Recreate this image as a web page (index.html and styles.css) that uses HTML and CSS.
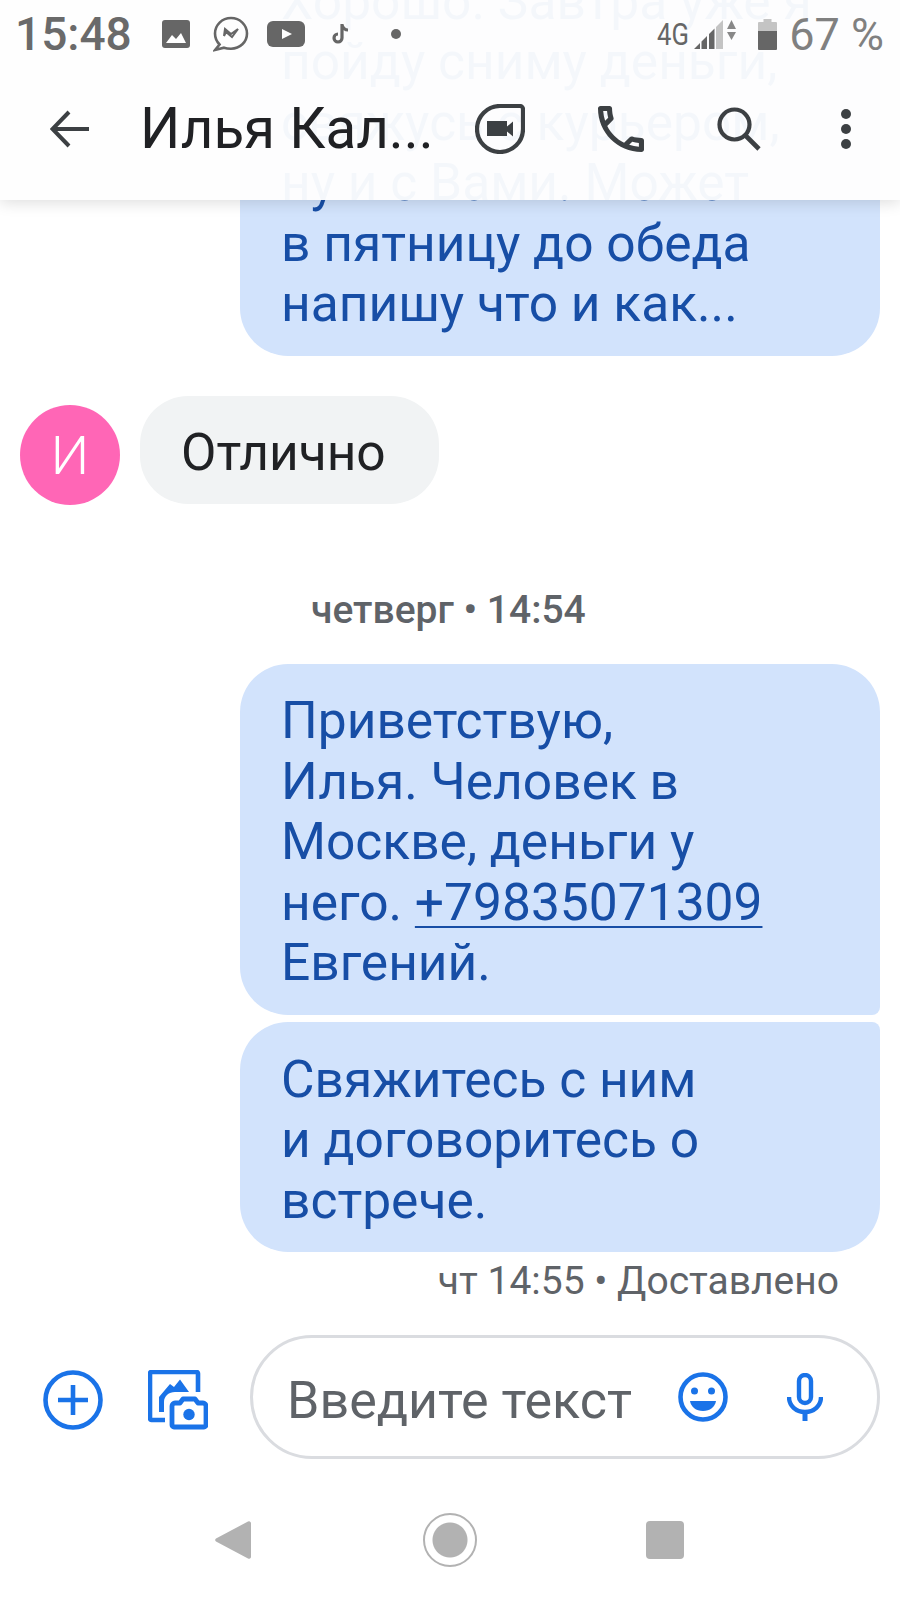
FILE: index.html
```html
<!DOCTYPE html>
<html lang="ru">

<head>
    <meta charset="UTF-8">
    <meta name="viewport" content="width=device-width, initial-scale=1.0">
    <title>Илья Калинин</title>
    <link rel="stylesheet" href="styles.css">
</head>

<body>
    <div class="screen">
        <header class="top">
            <div class="status">
                <span class="clock">15:48</span>
                <div class="notify">
                    <svg class="ic-photo" viewBox="0 0 28 28"><path d="M3 0h22a3 3 0 0 1 3 3v22a3 3 0 0 1-3 3H3a3 3 0 0 1-3-3V3a3 3 0 0 1 3-3z" fill="#666"/><path d="M4 23l6-8 4 4 5-6 5 10z" fill="#fff"/></svg>
                    <svg class="ic-messenger" viewBox="0 0 36 36"><path d="M18 2C9 2 2 9 2 17.500c0 4.500 2 8.300 4.500 11L2 34l9-2.300c2 .7 4 1 7 1 9 0 16-6.700 16-15.200S27 2 18 2z" fill="none" stroke="#666" stroke-width="2.600"/><path d="M11 20l1-7 6 5 7-5-6 8-6-5z" fill="none" stroke="#666" stroke-width="2"/></svg>
                    <svg class="ic-youtube" viewBox="0 0 38 26"><rect width="38" height="26" rx="6" fill="#666"/><path d="M15 8l10 5-10 5z" fill="#fff"/></svg>
                    <svg class="ic-tiktok" viewBox="0 0 20 22"><path d="M11 1v14a4 4 0 1 1-4-4M11 2c1 3 3 5 6 5" fill="none" stroke="#666" stroke-width="3.200"/></svg>
                    <span class="dot"></span>
                </div>
                <div class="system">
                    <span class="net">4G</span>
                    <svg class="ic-signal" viewBox="0 0 42 30"><path d="M0 30l6-6v6zM7.500 30v-7.500l5.500-5.500v13zM15 30V15l5.500-5.500V30z" fill="#666"/><path d="M22 30V8l7-7v29z" fill="#c4c4c4"/><path d="M37.500 1l4.500 9h-9zM33 13h9l-4.500 8z" fill="#888"/></svg>
                    <svg class="ic-battery" viewBox="0 0 19 31"><path d="M5.500 0h8v3h4.500a1 1 0 0 1 1 1v8H0V4a1 1 0 0 1 1-1h4.500z" fill="#c4c4c4"/><path d="M0 12h19v18a1 1 0 0 1-1 1H1a1 1 0 0 1-1-1z" fill="#666"/></svg>
                    <span class="percent">67 %</span>
                </div>
            </div>
            <div class="toolbar">
                <svg class="ic-back" viewBox="0 0 40 40"><path d="M39 20H3M19 3L2.500 20 19 37" fill="none" stroke="#3c4043" stroke-width="4"/></svg>
                <h1 class="name">Илья Кал...</h1>
                <svg class="ic-duo" viewBox="0 0 50 50"><path d="M25 2h20a3 3 0 0 1 3 3v20a23 23 0 1 1-23-23z" fill="none" stroke="#3c4043" stroke-width="4.200"/><path d="M12 17h20v5.500l6-5v15l-6-5V32H12z" fill="#3c4043"/></svg>
                <svg class="ic-phone" viewBox="3 3 18 18"><path d="M6.540 5c.06.89.21 1.760.45 2.590l-1.200 1.200c-.41-1.200-.67-2.470-.76-3.790h1.510m9.860 12.020c.85.24 1.720.39 2.600.45v1.490c-1.320-.09-2.590-.35-3.800-.75l1.200-1.190M7.500 3H4c-.55 0-1 .45-1 1 0 9.390 7.610 17 17 17 .55 0 1-.45 1-1v-3.490c0-.55-.45-1-1-1-1.240 0-2.450-.2-3.570-.57-.1-.04-.21-.05-.31-.05-.26 0-.51.1-.71.29l-2.200 2.200c-2.830-1.450-5.150-3.760-6.590-6.590l2.200-2.200c.28-.28.36-.67.25-1.020C8.700 6.450 8.500 5.250 8.500 4c0-.55-.45-1-1-1z" fill="#3c4043"/></svg>
                <svg class="ic-search" viewBox="0 0 44 44"><circle cx="17.500" cy="17.500" r="15" fill="none" stroke="#3c4043" stroke-width="4.200"/><path d="M28.500 28.500L42 42" stroke="#3c4043" stroke-width="4.600"/></svg>
                <svg class="ic-more" viewBox="0 0 10 40"><circle cx="5" cy="5" r="5" fill="#3c4043"/><circle cx="5" cy="20" r="5" fill="#3c4043"/><circle cx="5" cy="35" r="5" fill="#3c4043"/></svg>
            </div>
        </header>

        <main class="messages">
            <div class="bubble sent single">Хорошо. Завтра уже я<br>пойду сниму деньги,<br>свяжусь с курьером,<br>ну и с Вами. Может<br>в пятницу до обеда<br>напишу что и как...</div>

            <div class="incoming">
                <div class="avatar">И</div>
                <div class="bubble received">Отлично</div>
            </div>

            <div class="stamp">четверг • 14:54</div>

            <div class="bubble sent first">Приветствую,<br>Илья. Человек в<br>Москве, деньги у<br>него. <a href="#">+79835071309</a><br>Евгений.</div>
            <div class="bubble sent last">Свяжитесь с ним<br>и договоритесь о<br>встрече.</div>
            <div class="delivered">чт 14:55 • Доставлено</div>
        </main>

        <div class="composer">
            <svg class="ic-add" viewBox="0 0 60 60"><circle cx="30" cy="30" r="27.500" fill="none" stroke="#1a73e8" stroke-width="4.600"/><path d="M30 15v30M15 30h30" stroke="#1a73e8" stroke-width="4.600"/></svg>
            <svg class="ic-gallery" viewBox="0 0 60 60"><path d="M17 50H3.500a1.500 1.500 0 0 1-1.500-1.500v-45A1.500 1.500 0 0 1 3.500 2h45A1.500 1.500 0 0 1 50 3.500V22" fill="none" stroke="#1a73e8" stroke-width="4.600"/><path d="M11 42V27l11-13 4 3 6-7.500 9 12.500H27c-6 0-11 4-11 10v10z" fill="#1a73e8"/><path d="M24 36a3 3 0 0 1 3-3h5l3-4h12l3 4h5a3 3 0 0 1 3 3v19a2 2 0 0 1-2 2H26a2 2 0 0 1-2-2z" fill="none" stroke="#1a73e8" stroke-width="4.800" stroke-linejoin="round"/><circle cx="41" cy="44.500" r="5.700" fill="#1a73e8"/></svg>
            <div class="field">
                <span class="placeholder">Введите текст</span>
                <svg class="ic-emoji" viewBox="0 0 50 50"><circle cx="25" cy="25" r="22.500" fill="none" stroke="#1a73e8" stroke-width="4.600"/><circle cx="16.500" cy="19" r="3.500" fill="#1a73e8"/><circle cx="33.500" cy="19" r="3.500" fill="#1a73e8"/><path d="M12 29h26c-1 6-6 10-13 10s-12-4-13-10z" fill="#1a73e8"/></svg>
                <svg class="ic-mic" viewBox="0 0 36 48"><rect x="12" y="2" width="12" height="28" rx="6" fill="none" stroke="#1a73e8" stroke-width="4.400"/><path d="M2 24c0 9 7 15 16 15s16-6 16-15" fill="none" stroke="#1a73e8" stroke-width="4.400"/><path d="M18 38v10" stroke="#1a73e8" stroke-width="5"/></svg>
            </div>
        </div>

        <nav class="navbar">
            <svg class="nav-back" viewBox="0 0 36 40"><path d="M33 1.500a2 2 0 0 1 3 1.500v34a2 2 0 0 1-3 1.500L1 21.500a2 2 0 0 1 0-3z" fill="#b2b2b2"/></svg>
            <span class="nav-home"></span>
            <span class="nav-recent"></span>
        </nav>
    </div>
</body>

</html>
```

FILE: styles.css
```css
* {
    box-sizing: border-box;
}

body {
    margin: 0;
    background: #ffffff;
    font-family: 'Roboto', sans-serif;
}

.screen {
    position: relative;
    display: flex;
    flex-direction: column;
    width: 900px;
    height: 1600px;
    overflow: hidden;
}

svg {
    display: block;
    flex: none;
}

/* top bar sits over the messages, the old text shows through a little */
.top {
    position: absolute;
    top: 0;
    left: 0;
    right: 0;
    height: 200px;
    background: rgba(254, 254, 254, 0.96);
    box-shadow: 0 3px 14px rgba(0, 0, 0, 0.13);
}

.status {
    display: flex;
    align-items: center;
    height: 68px;
    padding: 0 16px 0 15px;
    color: #666666;
}

.clock {
    width: 147px;
    font-size: 46px;
    font-weight: 500;
    color: #6a6a6a;
}

.notify {
    display: flex;
    align-items: center;
}

.ic-photo {
    width: 28px;
    height: 28px;
}

.ic-messenger {
    width: 36px;
    height: 36px;
    margin-left: 23px;
}

.ic-youtube {
    width: 38px;
    height: 26px;
    margin-left: 18px;
}

.ic-tiktok {
    width: 20px;
    height: 22px;
    margin-left: 26px;
}

.dot {
    width: 10px;
    height: 10px;
    margin-left: 40px;
    border-radius: 50%;
    background: #666666;
}

.system {
    display: flex;
    align-items: center;
    margin-left: auto;
}

.net {
    width: 37px;
    font-size: 32px;
    color: #666666;
    transform: scaleX(0.8);
    transform-origin: left center;
}

.ic-signal {
    width: 42px;
    height: 30px;
}

.ic-battery {
    width: 19px;
    height: 31px;
    margin-left: 22px;
}

.percent {
    margin-left: 12px;
    font-size: 45px;
    color: #808080;
}

.toolbar {
    display: flex;
    align-items: center;
    height: 126px;
    padding: 0 0 4px 50px;
}

.ic-back {
    width: 40px;
    height: 40px;
}

.name {
    width: 335px;
    margin: 0 0 0 50px;
    font-size: 56.500px;
    font-weight: 400;
    color: #202124;
    white-space: nowrap;
}

.ic-duo {
    width: 50px;
    height: 50px;
}

.ic-phone {
    width: 46px;
    height: 46px;
    margin-left: 73px;
}

.ic-search {
    width: 44px;
    height: 44px;
    margin-left: 73px;
}

.ic-more {
    width: 10px;
    height: 40px;
    margin-left: 80px;
}

.messages {
    flex: 1;
    display: flex;
    flex-direction: column;
    justify-content: flex-end;
    align-items: flex-start;
    min-height: 0;
}

.bubble {
    flex: none;
    font-size: 51.500px;
    line-height: 60.500px;
}

.sent {
    width: 640px;
    margin-left: 240px;
    padding: 27px 41px 21px;
    background: #d2e3fc;
    color: #174ea6;
}

.sent a {
    color: #174ea6;
    text-decoration-thickness: 2px;
    text-underline-offset: 6px;
}

.single {
    border-radius: 48px;
}

.first {
    border-radius: 48px 48px 8px 48px;
}

.last {
    margin-top: 7px;
    padding-top: 28px;
    border-radius: 48px 8px 48px 48px;
}

.incoming {
    display: flex;
    flex: none;
    align-items: flex-end;
    gap: 20px;
    margin: 40px 0 0 20px;
}

.avatar {
    display: flex;
    align-items: center;
    justify-content: center;
    width: 100px;
    height: 100px;
    margin-bottom: -1px;
    border-radius: 50%;
    background: #ff66b6;
    color: #ffffff;
    font-size: 54px;
    font-weight: 300;
}

.received {
    padding: 27px 53px 21px 41px;
    border-radius: 48px;
    background: #f1f3f4;
    color: #202124;
}

.stamp {
    flex: none;
    margin: 83px 0 31px 311px;
    font-size: 39px;
    font-weight: 500;
    color: #5f6368;
}

.delivered {
    flex: none;
    align-self: flex-end;
    margin: 6px 61px 31px 0;
    font-size: 39px;
    color: #5f6368;
}

.composer {
    display: flex;
    flex: none;
    align-items: center;
    height: 124px;
    padding: 0 20px 0 43px;
}

.ic-add {
    width: 60px;
    height: 60px;
    margin-top: 6px;
}

.ic-gallery {
    width: 60px;
    height: 60px;
    margin: 6px 0 0 45px;
}

.field {
    flex: 1;
    display: flex;
    align-items: center;
    height: 124px;
    margin-left: 42px;
    padding: 6px 54px 0 34px;
    border: 3px solid #dadce0;
    border-radius: 62px;
}

.placeholder {
    font-size: 52px;
    color: #5f6368;
}

.ic-emoji {
    width: 50px;
    height: 50px;
    margin: -6px 0 0 auto;
}

.ic-mic {
    width: 36px;
    height: 48px;
    margin: -6px 0 0 59px;
}

.navbar {
    display: flex;
    flex: none;
    align-items: center;
    height: 141px;
    padding: 21px 0 0 215px;
}

.nav-back {
    width: 36px;
    height: 40px;
}

.nav-home {
    width: 54px;
    height: 54px;
    margin-left: 172px;
    border: 2px solid #b2b2b2;
    border-radius: 50%;
    background: radial-gradient(circle, #b2b2b2 0 17px, #ffffff 18px);
}

.nav-recent {
    width: 38px;
    height: 38px;
    margin-left: 169px;
    border-radius: 4px;
    background: #b2b2b2;
}
```
